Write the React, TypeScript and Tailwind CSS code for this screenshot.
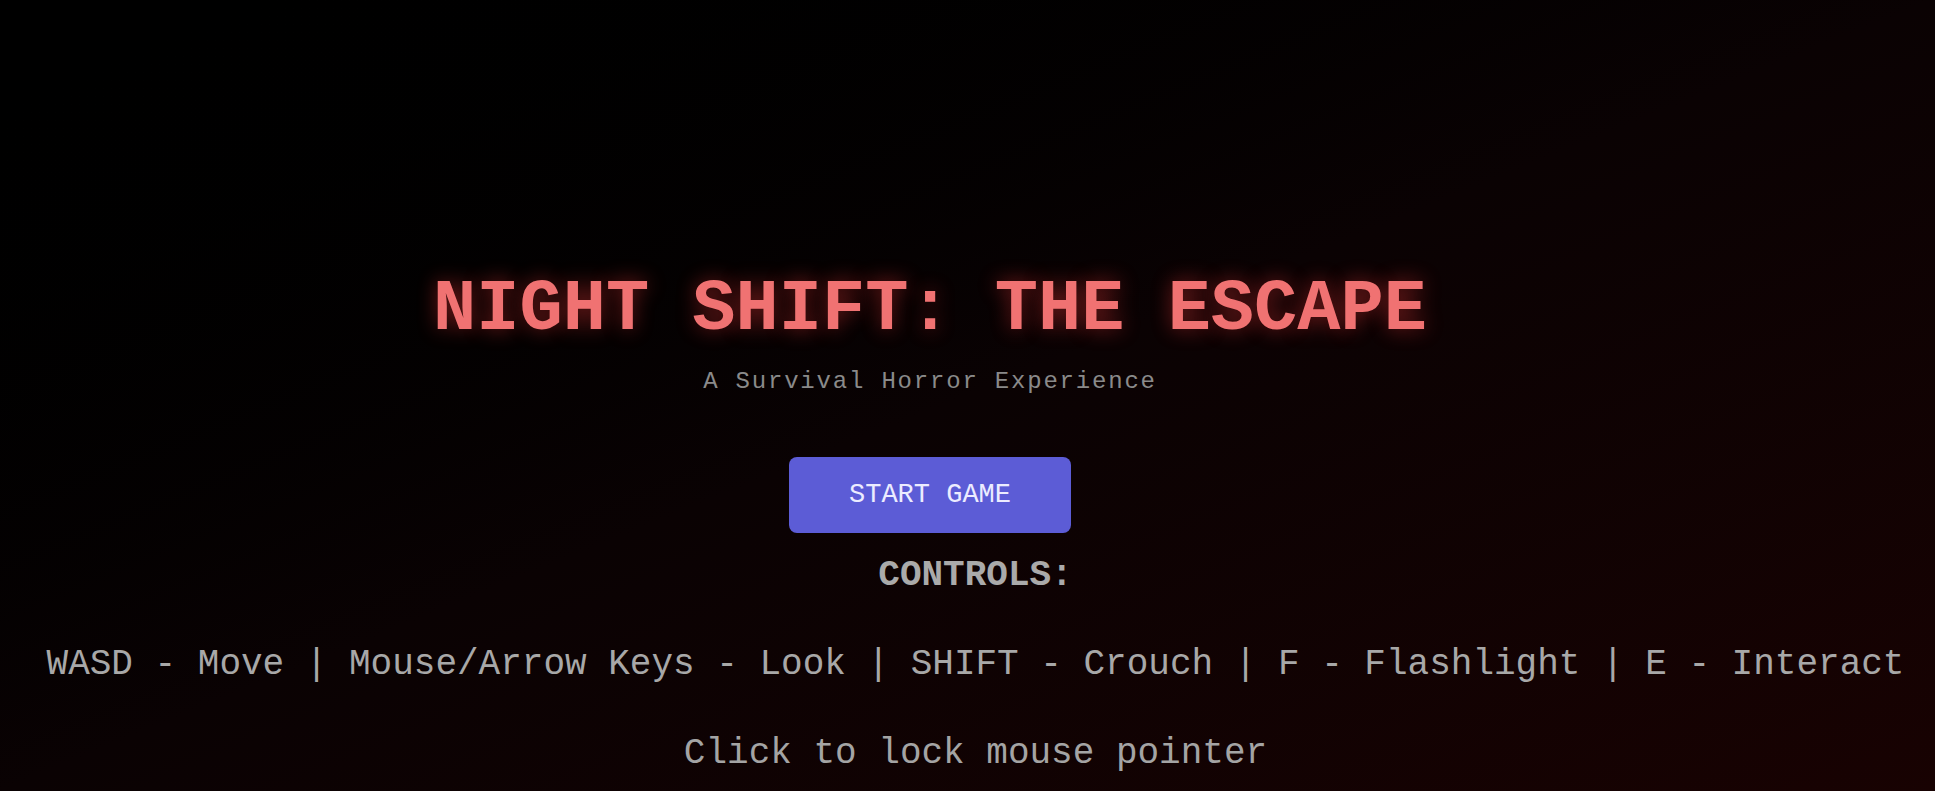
export default function App() {
  return (
    <div className="min-h-[791px] h-[791px] overflow-hidden bg-gradient-to-br from-black via-[#0a0203] to-[#180202] font-['Courier_New','Liberation_Mono',monospace]">
      <div className="flex flex-col items-center pt-[274px] pr-[75px]">
        <h1 className="text-[72px] leading-none font-bold text-[#f07272] whitespace-nowrap [text-shadow:0_0_20px_rgba(255,60,60,0.45)]">
          NIGHT SHIFT: THE ESCAPE
        </h1>
        <p className="mt-[24px] text-[24px] leading-none tracking-[1.8px] text-[#8a8a8a] whitespace-nowrap">
          A Survival Horror Experience
        </p>
        <button className="mt-[63px] w-[282px] h-[76px] rounded-lg bg-[#5c5cd6] text-[27px] leading-none text-[#ececff]">
          START GAME
        </button>
      </div>
      <div className="flex flex-col items-center pl-[16px]">
        <h2 className="mt-[25px] text-[36px] leading-none font-bold text-[#aaaaaa]">CONTROLS:</h2>
        <p className="mt-[53px] text-[36px] leading-none text-[#a8a8a8] whitespace-nowrap">
          WASD - Move | Mouse/Arrow Keys - Look | SHIFT - Crouch | F - Flashlight | E - Interact
        </p>
        <p className="mt-[53px] text-[36px] leading-none text-[#a4a4a4] whitespace-nowrap">
          Click to lock mouse pointer
        </p>
      </div>
    </div>
  )
}
